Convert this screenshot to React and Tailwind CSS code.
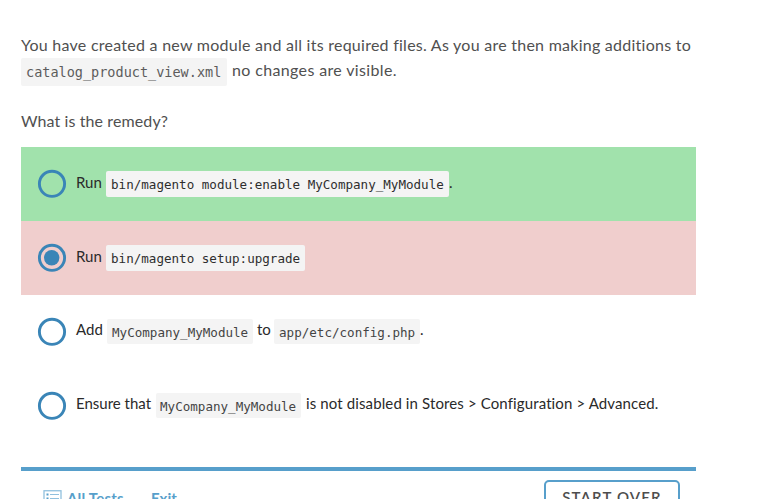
const MONO = "font-['DejaVu_Sans_Mono',monospace]";

function Code({ className, children }) {
  return (
    <code className={`${MONO} block shrink-0 whitespace-pre rounded-[2px] bg-[#f4f4f4] ${className}`}>
      {children}
    </code>
  );
}

function Words({ className = "", children }) {
  return <span className={`block shrink-0 whitespace-pre ${className}`}>{children}</span>;
}

function Radio({ checked = false }) {
  return (
    <svg className="ml-4 h-[30px] w-[30px] shrink-0" viewBox="0 0 30 30" fill="none">
      <circle cx="15" cy="14.8" r="12.6" stroke="#3a85b7" strokeWidth="2.9" />
      {checked && <circle cx="14.7" cy="14.8" r="7.7" fill="#3a85b7" />}
    </svg>
  );
}

function Option({ className = "", checked, children }) {
  return (
    <label className={`flex h-[74px] items-center text-[15px] text-[#2a2a2a] ${className}`}>
      <Radio checked={checked} />
      <div className="ml-[9px] flex h-[26px] items-start leading-[23px]">{children}</div>
    </label>
  );
}

const OPTION_CODE = "h-[26px] text-[12.57px] leading-[27px] pl-[5px] text-[#2e2e2e]";
const PLAIN_CODE = "h-[25px] text-[12.57px] leading-[27px] pl-[5px] text-[#444]";

export default function App() {
  return (
    <div className="h-[499px] w-[764px] overflow-hidden bg-white font-['Lato',sans-serif] text-[16px] text-[#505050] [font-variant-ligatures:none]">
      <main className="ml-[21px] w-[675px] pt-8">
        <div className="h-[115px] leading-[25px]">
          <Words className="tracking-[0.255px]">You have created a new module and all its required files. As you are then making additions to</Words>
          <div className="flex h-[29px]">
            <Code className="mt-px h-[28px] w-[206px] pl-[5px] text-[13.52px] leading-[29px] text-[#5c5c5c]">catalog_product_view.xml</Code>
            <Words className="ml-[5px] tracking-[0.36px]">no changes are visible.</Words>
          </div>
          <Words className="mt-[22px] tracking-[0.1px]">What is the remedy?</Words>
        </div>
        <Option className="bg-[#a1e2ac]">
          <Words className="w-[30px]">Run</Words>
          <Code className={`${OPTION_CODE} w-[343px]`}>bin/magento module:enable MyCompany_MyModule</Code>
          <Words>.</Words>
        </Option>
        <Option className="bg-[#f0cecd]" checked>
          <Words className="w-[30px]">Run</Words>
          <Code className={`${OPTION_CODE} w-[199px]`}>bin/magento setup:upgrade</Code>
        </Option>
        <Option>
          <Words className="-mt-px w-[31px]">Add</Words>
          <Code className={`${PLAIN_CODE} w-[146px]`}>MyCompany_MyModule</Code>
          <Words className="-mt-px ml-[4px] w-[17px]">to</Words>
          <Code className={`${PLAIN_CODE} w-[146px]`}>app/etc/config.php</Code>
          <Words className="-mt-px">.</Words>
        </Option>
        <Option>
          <Words className="-mt-px w-[80px]">Ensure that</Words>
          <Code className={`${PLAIN_CODE} w-[145px] -indent-px`}>MyCompany_MyModule</Code>
          <Words className="-mt-px ml-[5px] tracking-[0.12px]">is not disabled in Stores &gt; Configuration &gt; Advanced.</Words>
        </Option>
        <footer className="mt-[24px] flex h-[56px] items-start border-t-4 border-[#579fcb] text-[15px] font-bold leading-5 text-[#579fcb]">
          <svg className="ml-[22px] mt-[19px] h-[16px] w-[19px]" viewBox="0 0 19 16" fill="none" stroke="#91c0de">
            <rect x="1" y="0.75" width="17" height="14.5" strokeWidth="1.3" />
            <path d="M7 4.5h9M7 8.5h9M7 12.5h9" strokeWidth="1.2" />
            <path d="M3.5 4.5h2M3.5 8.5h2M3.5 12.5h2" stroke="#579fcb" strokeWidth="1.8" />
          </svg>
          <a className="ml-[5px] mt-[17px] block w-[84px] tracking-[0.2px]">All Tests</a>
          <a className="mt-[17px] block">Exit</a>
          <button className="ml-auto mr-4 mt-[9px] h-[40px] w-[136px] rounded-[5px] border-2 border-[#579fcb] pb-[5px] text-[15px] font-semibold leading-[27px] tracking-[1.15px] text-[#4d4d4d]">
            START OVER
          </button>
        </footer>
      </main>
    </div>
  );
}
